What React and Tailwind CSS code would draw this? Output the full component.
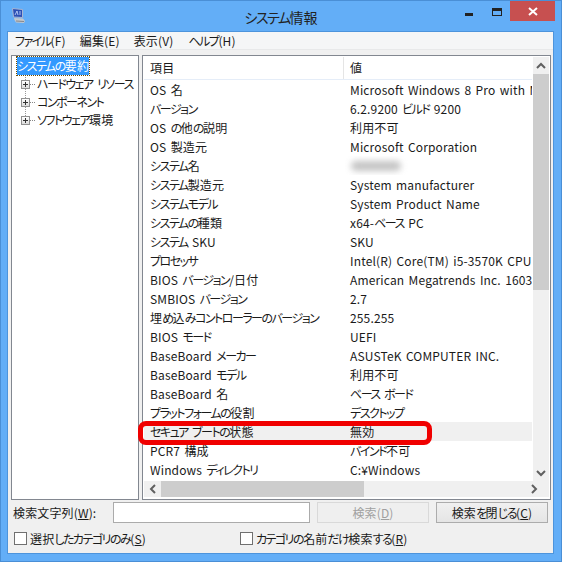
import React from 'react';

const rows = [
  ['OS 名', 'Microsoft Windows 8 Pro with Media Center'],
  ['バージョン', '6.2.9200 ビルド 9200'],
  ['OS の他の説明', '利用不可'],
  ['OS 製造元', 'Microsoft Corporation'],
  ['システム名', null],
  ['システム製造元', 'System manufacturer'],
  ['システムモデル', 'System Product Name'],
  ['システムの種類', 'x64-ベース PC'],
  ['システム SKU', 'SKU'],
  ['プロセッサ', 'Intel(R) Core(TM) i5-3570K CPU @ 3.40GHz'],
  ['BIOS バージョン/日付', 'American Megatrends Inc. 1603, 2012/08/17'],
  ['SMBIOS バージョン', '2.7'],
  ['埋め込みコントローラーのバージョン', '255.255'],
  ['BIOS モード', 'UEFI'],
  ['BaseBoard メーカー', 'ASUSTeK COMPUTER INC.'],
  ['BaseBoard モデル', '利用不可'],
  ['BaseBoard 名', 'ベース ボード'],
  ['プラットフォームの役割', 'デスクトップ'],
  ['セキュア ブートの状態', '無効'],
  ['PCR7 構成', 'バインド不可'],
  ['Windows ディレクトリ', 'C:¥Windows'],
];

const treeItems = ['ハードウェア リソース', 'コンポーネント', 'ソフトウェア環境'];

// Meiryo UI has narrow kana, so tighten only the kana runs
const T = ({ children }) =>
  children.split(/([\u3040-\u30ff]+)/).map((part, i) =>
    i % 2 ? <span key={i} className="tracking-[-1.5px]">{part}</span> : part
  );

const Chevron = ({ d }) => (
  <svg width="10" height="8" viewBox="0 0 10 8" fill="none" stroke="#606060" strokeWidth="2">
    <path d={d} />
  </svg>
);

const Check = ({ label, u }) => (
  <div className="flex items-center gap-[3px]">
    <div className="w-[13px] h-[13px] border border-[#707070] bg-white" />
    <span><T>{label}</T>(<span className="underline">{u}</span>)</span>
  </div>
);

export default function App() {
  return (
    <div className="relative w-[562px] h-[562px] overflow-hidden bg-[#63aef7] border border-[#4a8fd6] flex flex-col text-[12px] tracking-[0.15px] [word-spacing:1.5px] [font-feature-settings:'palt'] text-[#1a1a1a] font-['Noto_Sans_CJK_JP','Noto_Sans',sans-serif]">
      {/* Title bar */}
      <div className="h-[30px] shrink-0 grid grid-cols-[1fr_auto_1fr]">
        <div className="pl-[10px] pt-[6px]">
          <svg width="16" height="17" viewBox="0 0 16 17">
            <path d="M1.5 1.5 L11.5 2.5 V10.5 L2.5 10 Z" fill="#2c4fb5" stroke="#a9b6d2" />
            <path d="M4 8 L6 4 L7 8 M9 4 V8" stroke="#cfe0ff" strokeWidth="0.8" fill="none" />
            <path d="M3 11 L12 11.5 L14 14 L13 16 L5 15.5 L3.5 13 Z" fill="#c3c7cc" />
            <path d="M5 14 L13 14.5" stroke="#82878f" />
          </svg>
        </div>
        <div className="text-center text-[14px] tracking-normal leading-[32px] text-[#222]"><T>システム情報</T></div>
        <div className="flex items-start justify-end pr-[6px]">
          <div className="w-[29px] h-[20px] flex justify-center pt-[12px]"><div className="w-[8px] h-[3px] bg-[#222]" /></div>
          <div className="w-[27px] h-[20px] flex justify-center pt-[7px]"><div className="w-[10px] h-[8px] border border-t-[3px] border-[#222]" /></div>
          <div className="w-[45px] h-[20px] bg-[#c75050] flex items-center justify-center">
            <svg width="10" height="9" viewBox="0 0 10 9" stroke="#fff" strokeWidth="2"><path d="M1 1 L9 8 M9 1 L1 8" /></svg>
          </div>
        </div>
      </div>

      {/* Client area */}
      <div className="mx-[6px] w-[547px] h-[523px] shrink-0 bg-[#f0f0f0] border border-[#4d94dc] flex flex-col">
        {/* Menu */}
        <div className="h-[18px] shrink-0 bg-[#f5f6f7] border-b border-[#e8e9ea] flex gap-[14px] px-[7px] leading-[17px]">
          <span><T>ファイル</T>(F)</span>
          <span>編集(E)</span>
          <span className="mr-px">表示(V)</span>
          <span><T>ヘルプ</T>(H)</span>
        </div>

        {/* Panes */}
        <div className="flex gap-[3px] pl-[3px] pt-[5px] h-[451px] shrink-0">
          <div className="relative w-[128px] h-[445px] bg-white border border-[#828790] pt-[1px] pl-[5px]">
            <div className="absolute left-[13px] top-[18px] h-[50px] border-l border-dotted border-[#999]" />
            <div className="relative w-fit bg-[#3399ff] text-white outline-1 outline-dotted outline-[#6b4a00] h-[18px] leading-[18px]"><T>システムの要約</T></div>
            {treeItems.map((t) => (
              <div key={t} className="relative flex items-center h-[18px] pl-[4px] whitespace-nowrap">
                <div className="w-[9px] h-[9px] border border-[#919191] bg-gradient-to-b from-white to-[#dcdcdc] flex items-center justify-center relative">
                  <div className="absolute w-[5px] h-px bg-[#333]" />
                  <div className="absolute h-[5px] w-px bg-[#333]" />
                </div>
                <div className="w-[5px] mr-[2px] border-t border-dotted border-[#888]" />
                <span><T>{t}</T></span>
              </div>
            ))}
          </div>

          <div className="w-[409px] h-[445px] bg-white border border-[#828790] flex flex-col p-px">
            <div className="flex-1 flex min-h-0">
              <div className="w-[389px] flex flex-col min-w-0">
                <div className="h-[23px] shrink-0 flex border-b border-[#e5edf8] leading-[22px]">
                  <div className="w-[200px] pl-[6px] border-r border-[#e5e5e5]">項目</div>
                  <div className="pl-[6px]">値</div>
                </div>
                {rows.map(([k, v]) => (
                  <div key={k} className={`h-[19px] shrink-0 flex leading-[19px] whitespace-nowrap ${k.startsWith('セキュア') ? 'bg-[#f0f0f0]' : ''}`}>
                    <div className="w-[201px] pl-[6px] shrink-0"><T>{k}</T></div>
                    <div className="pl-[5px] overflow-hidden flex-1">
                      {v ? <T>{v}</T> : <div className="w-[50px] h-[10px] mt-[5px] ml-[1px] bg-[#c4c4c4] rounded-full blur-[3px]" />}
                    </div>
                  </div>
                ))}
              </div>
              {/* Vertical scrollbar */}
              <div className="w-[16px] ml-px flex flex-col bg-[#f0f0f0]">
                <div className="h-[17px] flex items-center justify-center"><Chevron d="M1 6 L5 2 L9 6" /></div>
                <div className="h-[216px] bg-[#cdcdcd]" />
                <div className="flex-1" />
                <div className="h-[17px] flex items-center justify-center"><Chevron d="M1 2 L5 6 L9 2" /></div>
              </div>
            </div>
            {/* Horizontal scrollbar */}
            <div className="h-[16px] mb-px shrink-0 flex bg-[#f0f0f0] items-stretch">
              <div className="w-[17px] flex items-center justify-center"><svg width="8" height="10" viewBox="0 0 8 10" fill="none" stroke="#606060" strokeWidth="2"><path d="M6 1 L2 5 L6 9" /></svg></div>
              <div className="w-[203px] bg-[#cdcdcd]" />
              <div className="flex-1" />
              <div className="w-[17px] mr-[7px] flex items-center justify-center"><svg width="8" height="10" viewBox="0 0 8 10" fill="none" stroke="#606060" strokeWidth="2"><path d="M2 1 L6 5 L2 9" /></svg></div>
            </div>
          </div>
        </div>

        {/* Search */}
        <div className="flex items-center h-[21px] mt-[1px] pl-[5px]">
          <span className="w-[100px] shrink-0">検索文字列(<span className="underline">W</span>):</span>
          <div className="w-[197px] h-[21px] bg-white border border-[#ababab]" />
          <div className="w-[112px] h-[21px] ml-[7px] border border-[#d9d9d9] bg-[#efefef] text-[#a0a0a0] flex items-center justify-center">検索(<span className="underline">D</span>)</div>
          <div className="w-[112px] h-[21px] ml-[7px] border border-[#acacac] bg-gradient-to-b from-[#f0f0f0] to-[#e5e5e5] flex items-center justify-center"><T>検索を閉じる</T>(<span className="underline">C</span>)</div>
        </div>
        <div className="flex items-center h-[13px] mt-[9px] pl-[6px]">
          <div className="w-[226px]"><Check label="選択したカテゴリのみ" u="S" /></div>
          <Check label="カテゴリの名前だけ検索する" u="R" />
        </div>
      </div>

      {/* Red highlight */}
      <div className="absolute left-[137px] top-[420px] w-[294px] h-[24px] border-[5px] border-[#f00000] rounded-[8px]" />
    </div>
  );
}
